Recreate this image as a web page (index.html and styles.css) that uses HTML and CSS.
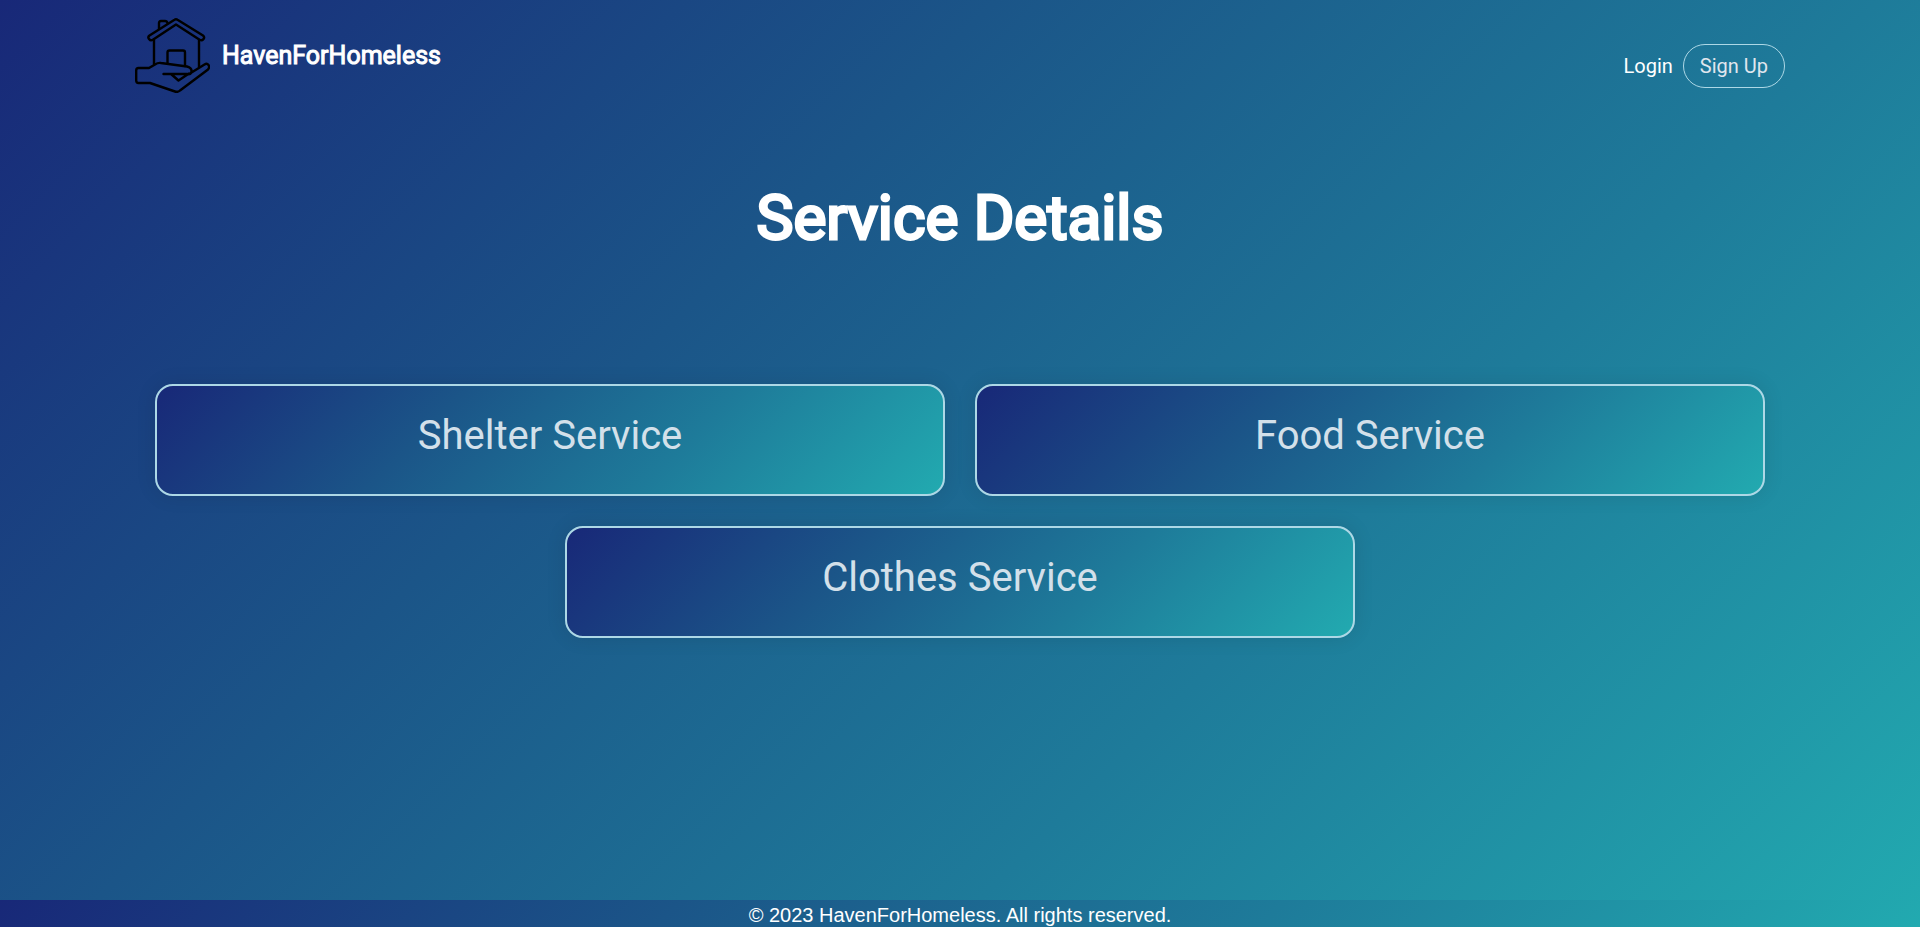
FILE: index.html
```html
<!DOCTYPE html>
<html lang="en">
<head>
<meta charset="utf-8">
<meta name="viewport" content="width=device-width, initial-scale=1">
<title>HavenForHomeless</title>
<link rel="stylesheet" href="styles.css">
</head>
<body class="page">
<header class="header">
  <a class="brand" href="#">
    <svg class="brand-icon" viewBox="0 0 75 75" fill="none" stroke="#000" stroke-width="2.400" stroke-linejoin="round" stroke-linecap="round" aria-hidden="true">
      <path d="M24 10.500V5q0-2 2-2h4q2 0 2.500 2"/>
      <path d="M39.500 1.800Q41 .8 42.500 1.800L68 17.500q2 1.500 .5 3.500t-3.500 1L41 6.500 17.500 22q-2 1-3.500-1t.5-3.500Z"/>
      <path d="M19 22V46M64 22V49M32.500 45V34.500q0-2 2-2h13.500q2 0 2 2V48"/>
      <path d="M3.500 50H14L20 46.500Q23 44.500 26 45L52 48.500Q57 50 56.500 53.500T52 56H28.500M36 56 43.500 62.500 54 55.500M56.500 54.500 69.500 46.500Q72 45 73.500 47T73 51.500L45 72.500Q43 74.500 40 73.500L15 65H3.500Q1.200 65 1.200 62.500V52.500Q1.200 50 3.500 50"/>
    </svg>
    <span class="brand-name">HavenForHomeless</span>
  </a>
  <nav class="nav">
    <a class="login" href="#">Login</a>
    <a class="signup" href="#">Sign Up</a>
  </nav>
</header>
<main class="main">
  <h1 class="title">Service Details</h1>
  <div class="services">
    <a class="card" href="#">Shelter Service</a>
    <a class="card" href="#">Food Service</a>
    <a class="card" href="#">Clothes Service</a>
  </div>
</main>
<footer class="footer">© 2023 HavenForHomeless. All rights reserved.</footer>
</body>
</html>
```
FILE: styles.css
```css
:root {
  --blend: linear-gradient(135deg, #182878, #1b5588 35%, #1e7b9a 66%, #22aab0);
}
* { box-sizing: border-box; }
a { color: inherit; text-decoration: none; }
.page {
  margin: 0;
  min-height: 100vh;
  display: flex;
  flex-direction: column;
  background: var(--blend);
  color: #fff;
  font-family: Roboto, "Liberation Sans", sans-serif;
  font-size: 20px;
}
.header, .main {
  width: 100%;
  max-width: 1690px;
  margin: 0 auto;
  padding: 0 20px;
}
.header {
  display: flex;
  justify-content: space-between;
  align-items: flex-start;
  padding-top: 18px;
}
.brand { display: flex; align-items: center; gap: 12px; }
.brand-icon { width: 75px; height: 75px; }
.brand-name { font-size: 25px; font-weight: 400; -webkit-text-stroke: 1px #fff; }
.nav { display: flex; align-items: center; gap: 10px; margin-top: 26px; line-height: 24px; }
.signup {
  padding: 9px 16px;
  border: 1px solid #add8e6;
  border-radius: 24px;
  color: #e0e6ee;
}
.main { flex: 1; }
.title {
  margin: 85px 0 127px;
  font-size: 62px;
  line-height: 79px;
  font-weight: 400;
  -webkit-text-stroke: 3px #fff;
  text-align: center;
}
.services {
  display: flex;
  flex-wrap: wrap;
  justify-content: center;
  gap: 30px;
  padding: 0 20px;
}
.card {
  flex: 0 0 calc(50% - 15px);
  padding: 26px 20px 34px;
  border: 2px solid #add8e6;
  border-radius: 18px;
  background: var(--blend);
  box-shadow: 0 0 20px rgba(0, 0, 0, 0.1);
  color: #d3e0ea;
  font-size: 40px;
  line-height: 48px;
  text-align: center;
}
.footer {
  padding-top: 4px;
  background: var(--blend);
  font-family: "Liberation Sans", Arial, sans-serif;
  font-size: 20px;
  line-height: 23px;
  text-align: center;
}
```
